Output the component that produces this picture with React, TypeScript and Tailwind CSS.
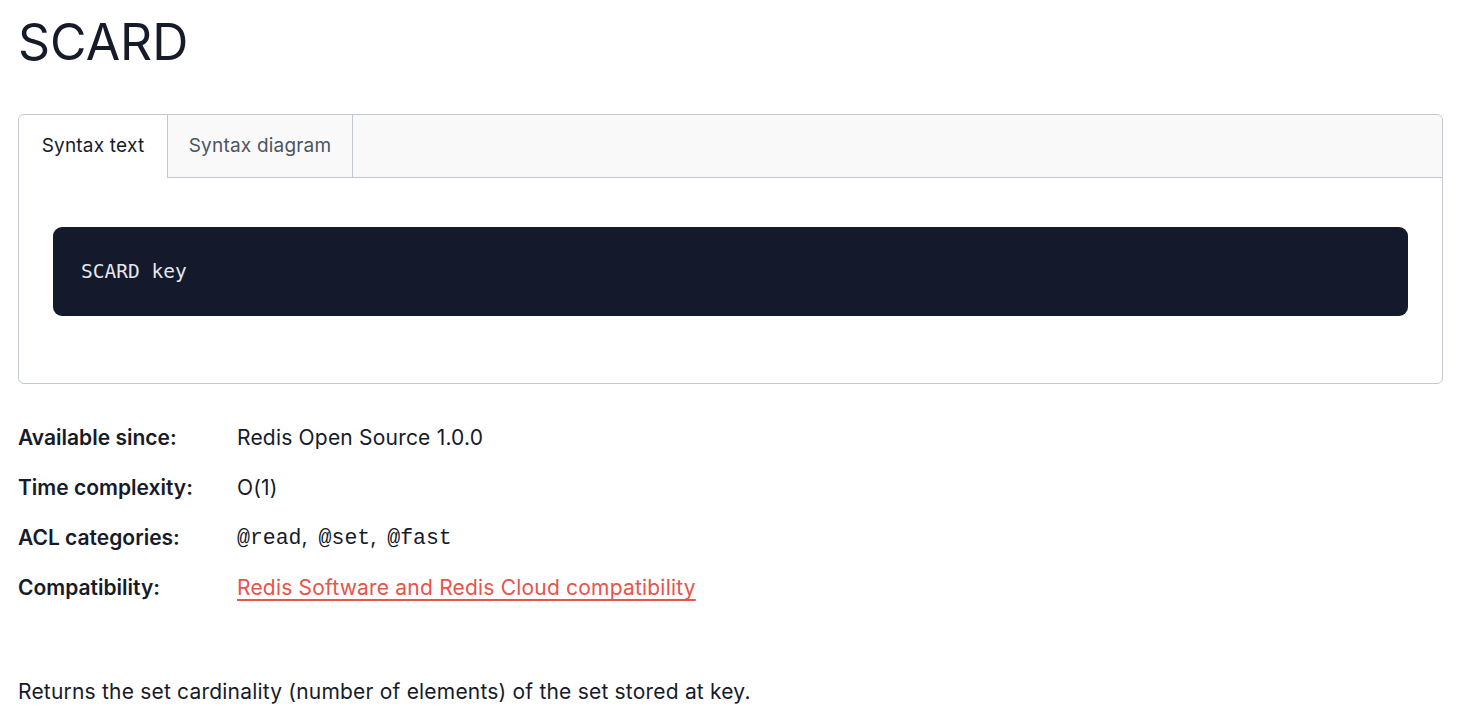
import { useState } from 'react'

const rows = [
  { label: 'Available since:', value: 'Redis Open Source 1.0.0' },
  { label: 'Time complexity:', value: 'O(1)' },
]

const mono = { fontFamily: '"Liberation Mono", monospace' }

export default function App() {
  const [tab, setTab] = useState<'text' | 'diagram'>('text')

  return (
    <div className="min-h-screen bg-white px-[18px] text-[#161b29]" style={{ fontFamily: 'Inter, "Noto Sans", sans-serif' }}>
      <h1 className="pt-[14px] text-[50px] font-normal leading-[56px]">SCARD</h1>

      <div className="mt-[44px] w-[1425px] rounded-[6px] border border-[#c3c8ce]">
        <div className="flex h-[63px] rounded-t-[6px] border-b border-[#c3c8ce] bg-[#f9f9f9]">
          <button
            onClick={() => setTab('text')}
            className={
              tab === 'text'
                ? '-mb-px w-[149px] rounded-tl-[6px] border-r border-[#c3c8ce] bg-white text-[19px] tracking-[0.2px] text-[#161b29]'
                : 'w-[149px] border-r border-[#c3c8ce] text-[19px] tracking-[0.2px] text-[#4b5563]'
            }
          >
            Syntax text
          </button>
          <button
            onClick={() => setTab('diagram')}
            className={
              tab === 'diagram'
                ? '-mb-px w-[185px] border-r border-[#c3c8ce] bg-white text-[19px] tracking-[0.2px] text-[#161b29]'
                : 'w-[185px] border-r border-[#c3c8ce] text-[19px] tracking-[0.2px] text-[#4b5563]'
            }
          >
            Syntax diagram
          </button>
        </div>
        <div className="px-[34px] pb-[67px] pt-[49px]">
          <div className="flex h-[89px] items-center rounded-[9px] bg-[#141a2b] px-[28px]">
            <span className="text-[19.5px] text-[#e5e7eb]" style={{ fontFamily: '"DejaVu Sans Mono", monospace' }}>
              SCARD key
            </span>
          </div>
        </div>
      </div>

      <div className="mt-[29px] flex flex-col text-[21px]">
        {rows.map((r) => (
          <div key={r.label} className="flex h-[50px] items-center">
            <span className="w-[219px] font-semibold">{r.label}</span>
            <span className="tracking-[0.2px]">{r.value}</span>
          </div>
        ))}
        <div className="flex h-[50px] items-center">
          <span className="w-[219px] font-semibold">ACL categories:</span>
          <span>
            <code className="text-[21.5px]" style={mono}>@read</code>,
            <code className="ml-[11px] text-[21.5px]" style={mono}>@set</code>,
            <code className="ml-[11px] text-[21.5px]" style={mono}>@fast</code>
          </span>
        </div>
        <div className="flex h-[50px] items-center">
          <span className="w-[219px] font-semibold">Compatibility:</span>
          <a href="#" className="tracking-[0.2px] text-[#e8534a] underline underline-offset-[4px]">
            Redis Software and Redis Cloud compatibility
          </a>
        </div>
      </div>

      <p className="mt-[63px] text-[21px] tracking-[0.2px]">
        Returns the set cardinality (number of elements) of the set stored at key.
      </p>
    </div>
  )
}
